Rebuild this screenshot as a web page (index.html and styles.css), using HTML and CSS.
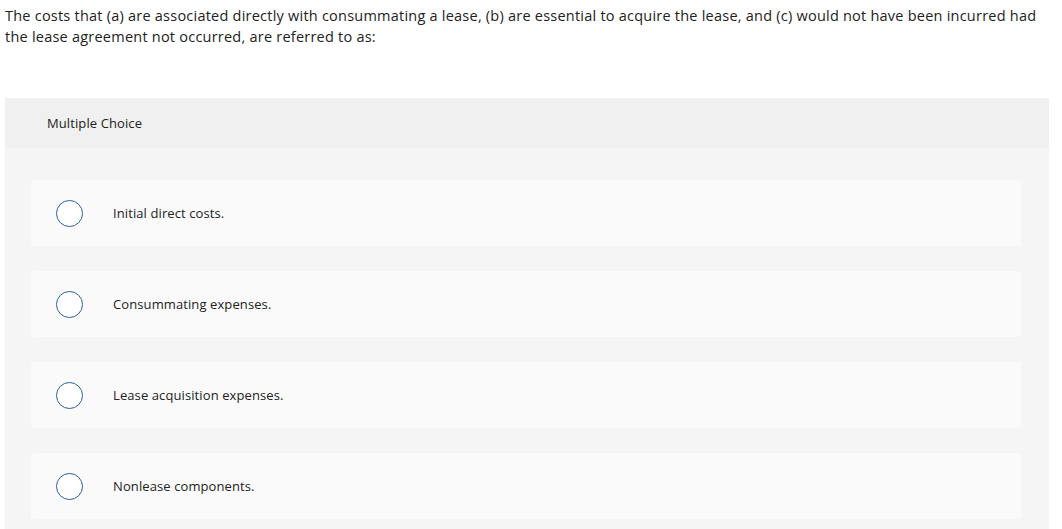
FILE: index.html
```html
<!DOCTYPE html>
<html>
<head>
<meta charset="utf-8">
<link rel="stylesheet" href="styles.css">
</head>
<body>
<div class="page">
  <p class="question">The costs that (a) are associated directly with consummating a lease, (b) are essential to acquire the lease, and (c) would not have been incurred had the lease agreement not occurred, are referred to as:</p>
  <div class="panel">
    <div class="panel-head">Multiple Choice</div>
    <div class="choices">
      <div class="choice"><span class="radio"></span><span class="label">Initial direct costs.</span></div>
      <div class="choice"><span class="radio"></span><span class="label">Consummating expenses.</span></div>
      <div class="choice"><span class="radio"></span><span class="label">Lease acquisition expenses.</span></div>
      <div class="choice"><span class="radio"></span><span class="label">Nonlease components.</span></div>
    </div>
  </div>
</div>
</body>
</html>
```
FILE: styles.css
```css
html, body { margin: 0; padding: 0; background: #fff; }
body { font-family: "Open Sans", "Liberation Sans", sans-serif; color: #222; }
.page { padding: 0 13px 0 5px; }
.question {
  margin: 0;
  padding-top: 5px;
  font-size: 14.5px;
  letter-spacing: 0.23px;
  line-height: 21px;
  color: #222;
  width: 1040px;
}
.panel {
  margin-top: 51px;
  background: #f5f5f5;
}
.panel-head {
  background: #f0f0f0;
  height: 50px;
  display: flex;
  align-items: center;
  padding-left: 42px;
  font-size: 13px;
  letter-spacing: 0.1px;
  color: #222;
}
.choices {
  padding: 32px 28px 10px 26px;
  display: flex;
  flex-direction: column;
  gap: 25px;
}
.choice {
  background: #fafafa;
  border-radius: 3px;
  height: 66px;
  display: flex;
  align-items: center;
  padding-left: 25px;
}
.radio {
  width: 25px;
  height: 25px;
  border: 1.5px solid #2a5f97;
  border-radius: 50%;
  background: #fff;
  flex: none;
}
.label {
  margin-left: 30px;
  font-size: 13px;
  letter-spacing: 0.1px;
  color: #222;
}
```
